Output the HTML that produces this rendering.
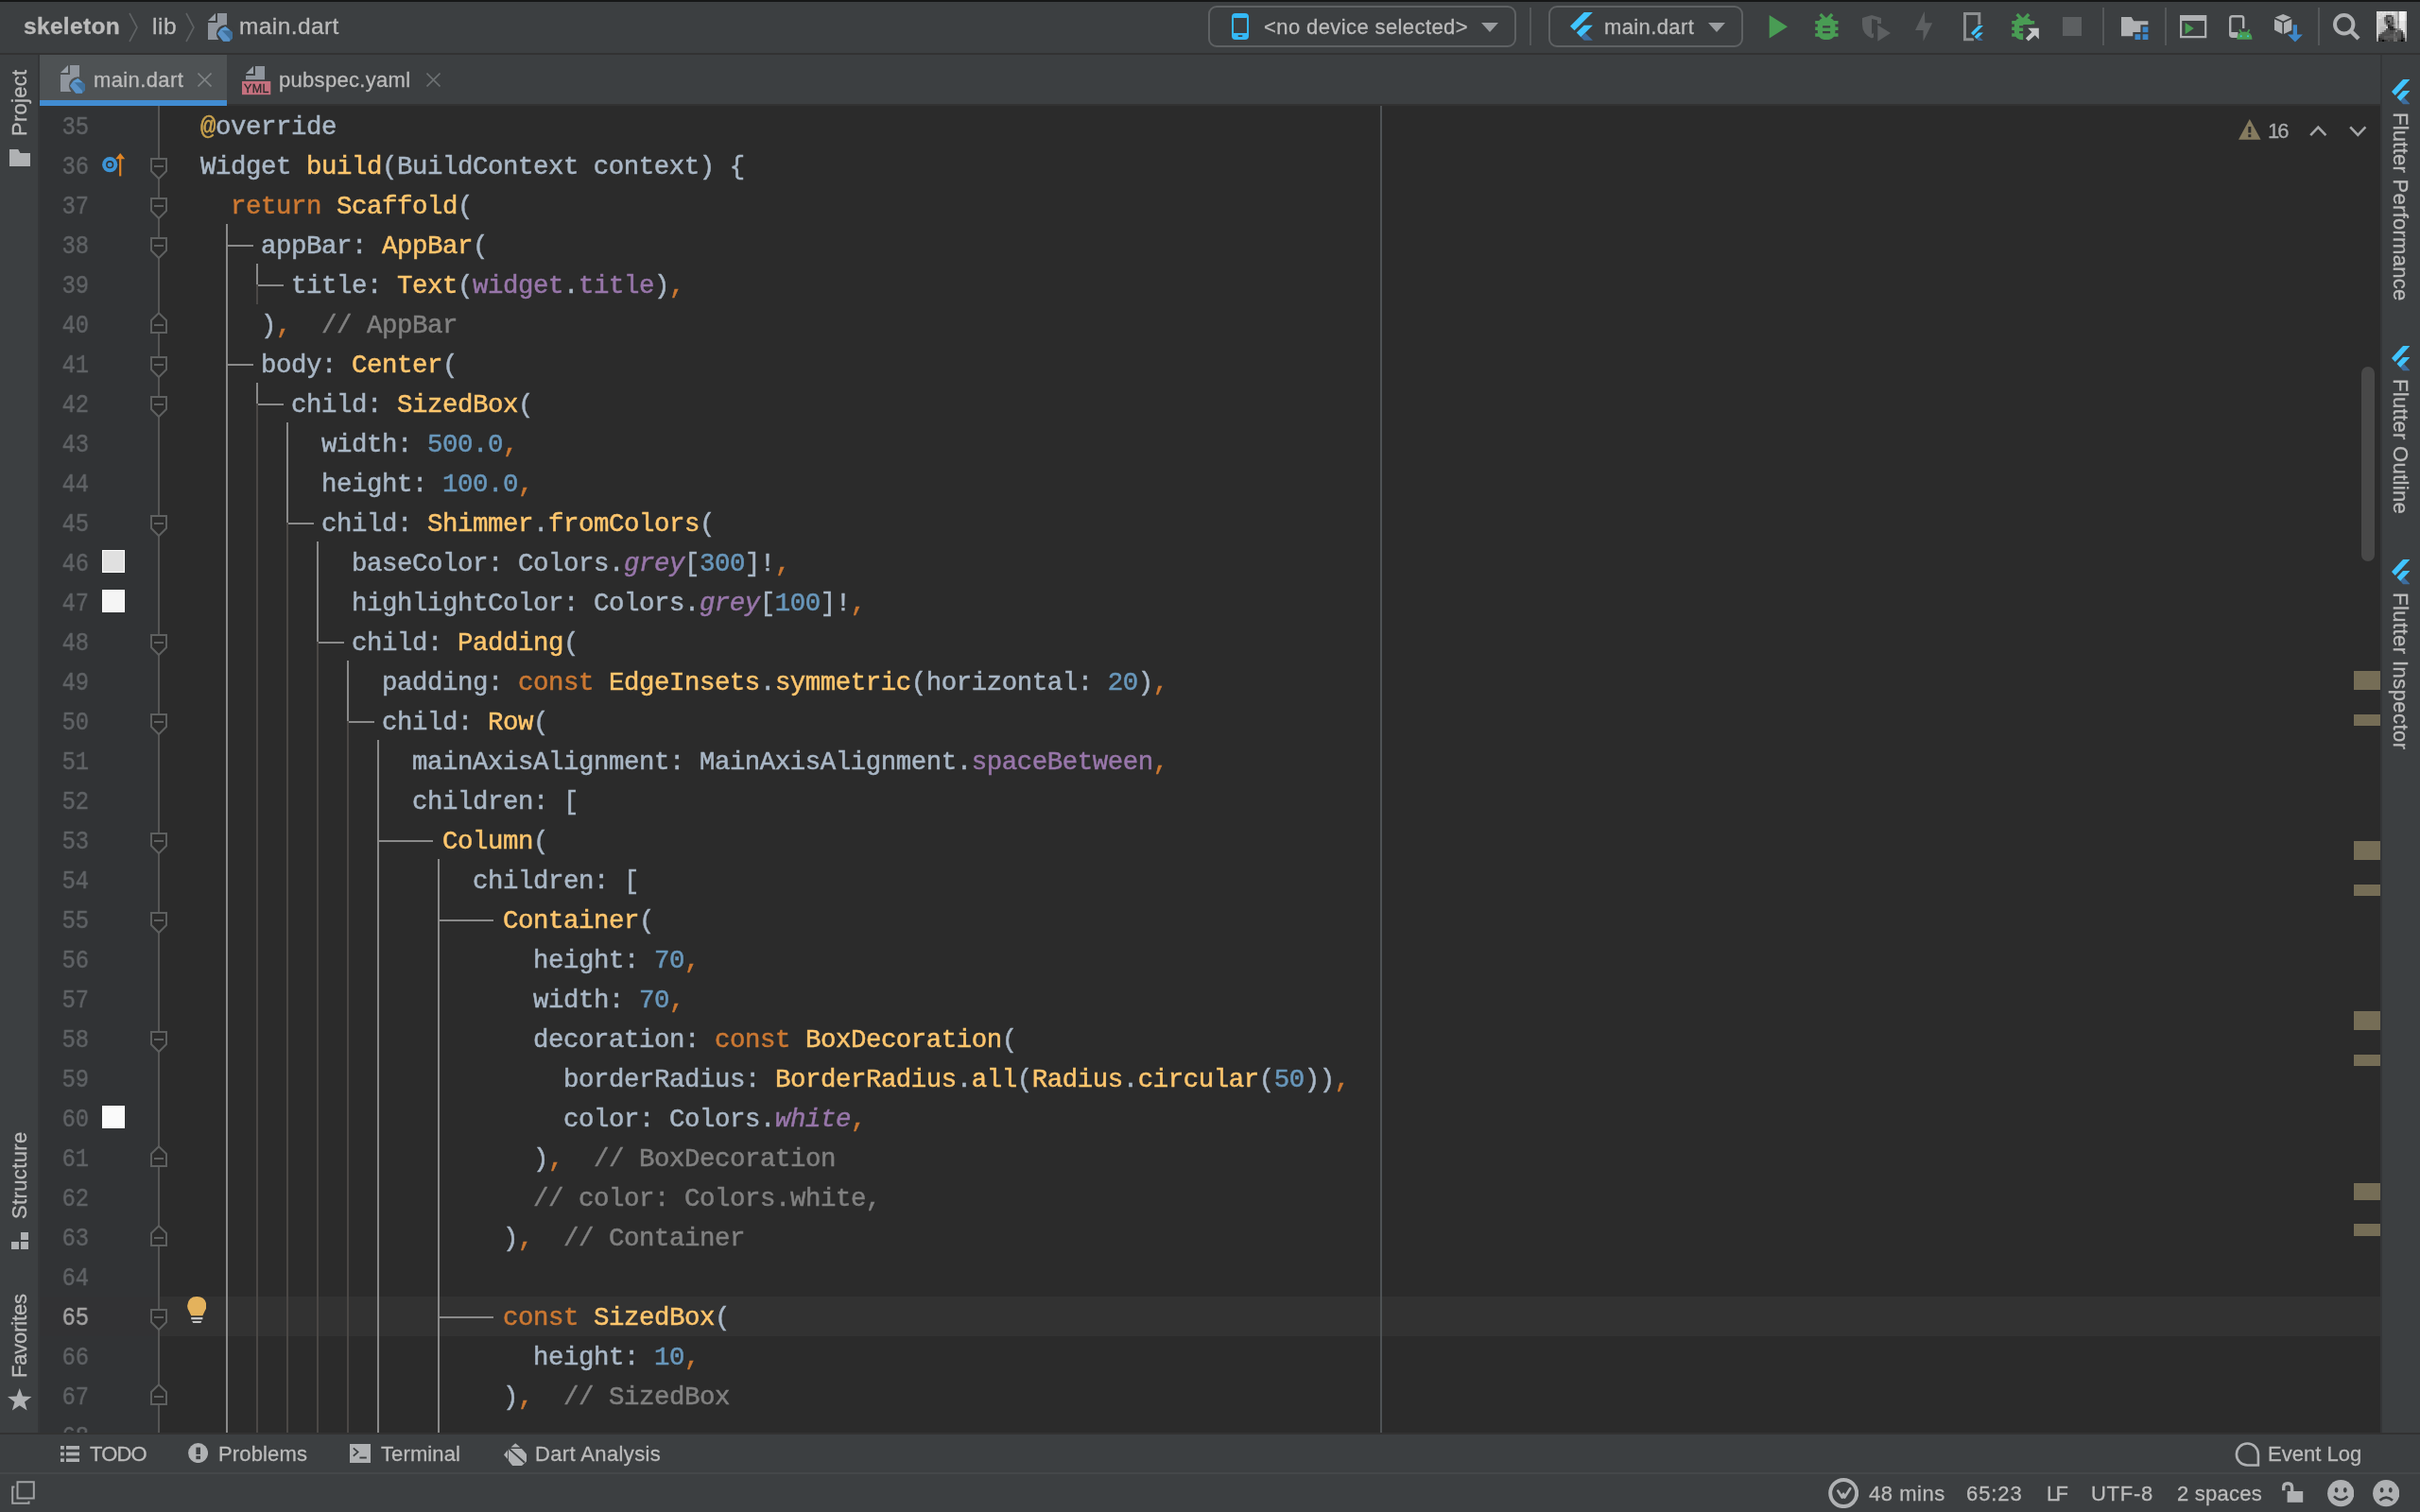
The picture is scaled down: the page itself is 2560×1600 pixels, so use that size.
<!DOCTYPE html>
<html><head><meta charset="utf-8"><title>skeleton - main.dart</title>
<style>
*{box-sizing:border-box;margin:0;padding:0}
html,body{width:2560px;height:1600px;overflow:hidden;background:#3c3f41}
body{position:relative;font-family:"Liberation Sans",sans-serif;color:#bbbbbb;font-size:26px}
.abs{position:absolute}
#nav{position:absolute;left:0;top:0;width:2560px;height:58px;background:#3c3f41;border-top:2px solid #161717;border-bottom:2px solid #323232}
#tabs{position:absolute;left:42px;top:58px;width:2478px;height:54px;background:#3c3f41}
#lstrip{position:absolute;left:0;top:58px;width:42px;height:1458px;background:#3c3f41;border-right:2px solid #343638}
#rstrip{position:absolute;left:2518px;top:58px;width:42px;height:1458px;background:#3c3f41;border-left:2px solid #343638}
#editor{position:absolute;left:42px;top:112px;width:2476px;height:1404px;background:#2b2b2b;overflow:hidden}
#gutter{position:absolute;left:0;top:0;width:126px;height:1405px;background:#313335}
#tools{position:absolute;left:0;top:1516px;width:2560px;height:42px;background:#3c3f41;border-top:2px solid #323232}
#status{position:absolute;left:0;top:1558px;width:2560px;height:42px;background:#3c3f41;border-top:2px solid #45484a}
.t{position:absolute;white-space:pre;line-height:1;-webkit-text-stroke:0.3px currentColor}
.code{position:absolute;white-space:pre;font-family:"Liberation Mono",monospace;font-size:27.4px;letter-spacing:-0.443px;line-height:42px;height:42px;color:#a9b7c6;-webkit-text-stroke:0.5px currentColor}
.ln{position:absolute;white-space:pre;font-family:"Liberation Mono",monospace;font-size:28px;line-height:42px;height:42px;color:#606366;left:0px;width:52px;text-align:right;-webkit-text-stroke:0.45px currentColor;transform:scaleX(0.85);transform-origin:100% 50%}
.k{color:#cc7832}.f{color:#ffc66d}.n{color:#6897bb}.p{color:#9876aa}.pi{color:#9876aa;font-style:italic}.c{color:#808080}.a{color:#c9a24d}
.code,.t,.ln{will-change:transform}
.gv{position:absolute;width:2px}
.gh{position:absolute;height:2px}
.vt{position:absolute;white-space:pre;line-height:1;font-size:26px;color:#bbbbbb}
</style></head><body>

<div id="nav"></div>
<div id="tabs"><div class="abs" style="left:0;top:52px;width:2478px;height:2px;background:#323232"></div><div class="abs" style="left:0;top:0;width:198px;height:54px;background:#4e5254"></div><div class="abs" style="left:0;top:48px;width:198px;height:6px;background:#418cd2"></div></div>
<div id="lstrip"></div><div id="rstrip"></div>
<div id="editor">
<div id="gutter"></div>
<div class="abs" style="left:126px;top:1260px;width:2350px;height:42px;background:#323232"></div>
<div class="abs" style="left:0;top:1260px;width:126px;height:42px;background:#323234"></div>
<div class="gv" style="left:125px;top:0;height:1405px;background:#555555"></div>
<div class="gv" style="left:1418px;top:0;height:1405px;background:#4f5355"></div>
<div class="gv" style="left:197px;top:125px;height:1279px;background:#8a8a8a"></div>
<div class="gh" style="left:199px;top:147px;width:27px;background:#8a8a8a"></div>
<div class="gh" style="left:199px;top:273px;width:27px;background:#8a8a8a"></div>
<div class="gv" style="left:229px;top:167px;height:22px;background:#8a8a8a"></div>
<div class="gv" style="left:229px;top:189px;height:21px;background:#4b4846"></div>
<div class="gh" style="left:231px;top:189px;width:27px;background:#8a8a8a"></div>
<div class="gv" style="left:229px;top:293px;height:22px;background:#8a8a8a"></div>
<div class="gv" style="left:229px;top:315px;height:1089px;background:#4b4846"></div>
<div class="gh" style="left:231px;top:315px;width:27px;background:#8a8a8a"></div>
<div class="gv" style="left:261px;top:335px;height:106px;background:#8a8a8a"></div>
<div class="gv" style="left:261px;top:441px;height:963px;background:#4b4846"></div>
<div class="gh" style="left:263px;top:441px;width:27px;background:#8a8a8a"></div>
<div class="gv" style="left:293px;top:461px;height:106px;background:#8a8a8a"></div>
<div class="gv" style="left:293px;top:567px;height:837px;background:#4b4846"></div>
<div class="gh" style="left:295px;top:567px;width:27px;background:#8a8a8a"></div>
<div class="gv" style="left:325px;top:587px;height:64px;background:#8a8a8a"></div>
<div class="gv" style="left:325px;top:651px;height:753px;background:#4b4846"></div>
<div class="gh" style="left:327px;top:651px;width:27px;background:#8a8a8a"></div>
<div class="gv" style="left:357px;top:671px;height:733px;background:#8a8a8a"></div>
<div class="gh" style="left:359px;top:777px;width:57px;background:#8a8a8a"></div>
<div class="gv" style="left:421px;top:797px;height:607px;background:#8a8a8a"></div>
<div class="gh" style="left:423px;top:861px;width:57px;background:#8a8a8a"></div>
<div class="gh" style="left:423px;top:1281px;width:57px;background:#8a8a8a"></div>
<div class="ln" style="top:1.5px">35</div>
<div class="code" style="left:170px;top:1.5px"><span class="a">@</span>override</div>
<div class="ln" style="top:43.5px">36</div>
<div class="code" style="left:170px;top:43.5px">Widget <span class="f">build</span>(BuildContext context) {</div>
<div class="ln" style="top:85.5px">37</div>
<div class="code" style="left:202px;top:85.5px"><span class="k">return </span><span class="f">Scaffold</span>(</div>
<div class="ln" style="top:127.5px">38</div>
<div class="code" style="left:234px;top:127.5px">appBar: <span class="f">AppBar</span>(</div>
<div class="ln" style="top:169.5px">39</div>
<div class="code" style="left:266px;top:169.5px">title: <span class="f">Text</span>(<span class="p">widget</span>.<span class="p">title</span>)<span class="k">,</span></div>
<div class="ln" style="top:211.5px">40</div>
<div class="code" style="left:234px;top:211.5px">)<span class="k">,</span><span class="c">  // AppBar</span></div>
<div class="ln" style="top:253.5px">41</div>
<div class="code" style="left:234px;top:253.5px">body: <span class="f">Center</span>(</div>
<div class="ln" style="top:295.5px">42</div>
<div class="code" style="left:266px;top:295.5px">child: <span class="f">SizedBox</span>(</div>
<div class="ln" style="top:337.5px">43</div>
<div class="code" style="left:298px;top:337.5px">width: <span class="n">500.0</span><span class="k">,</span></div>
<div class="ln" style="top:379.5px">44</div>
<div class="code" style="left:298px;top:379.5px">height: <span class="n">100.0</span><span class="k">,</span></div>
<div class="ln" style="top:421.5px">45</div>
<div class="code" style="left:298px;top:421.5px">child: <span class="f">Shimmer</span>.<span class="f">fromColors</span>(</div>
<div class="ln" style="top:463.5px">46</div>
<div class="code" style="left:330px;top:463.5px">baseColor: Colors.<span class="pi">grey</span>[<span class="n">300</span>]!<span class="k">,</span></div>
<div class="ln" style="top:505.5px">47</div>
<div class="code" style="left:330px;top:505.5px">highlightColor: Colors.<span class="pi">grey</span>[<span class="n">100</span>]!<span class="k">,</span></div>
<div class="ln" style="top:547.5px">48</div>
<div class="code" style="left:330px;top:547.5px">child: <span class="f">Padding</span>(</div>
<div class="ln" style="top:589.5px">49</div>
<div class="code" style="left:362px;top:589.5px">padding: <span class="k">const </span><span class="f">EdgeInsets</span>.<span class="f">symmetric</span>(horizontal: <span class="n">20</span>)<span class="k">,</span></div>
<div class="ln" style="top:631.5px">50</div>
<div class="code" style="left:362px;top:631.5px">child: <span class="f">Row</span>(</div>
<div class="ln" style="top:673.5px">51</div>
<div class="code" style="left:394px;top:673.5px">mainAxisAlignment: MainAxisAlignment.<span class="p">spaceBetween</span><span class="k">,</span></div>
<div class="ln" style="top:715.5px">52</div>
<div class="code" style="left:394px;top:715.5px">children: [</div>
<div class="ln" style="top:757.5px">53</div>
<div class="code" style="left:426px;top:757.5px"><span class="f">Column</span>(</div>
<div class="ln" style="top:799.5px">54</div>
<div class="code" style="left:458px;top:799.5px">children: [</div>
<div class="ln" style="top:841.5px">55</div>
<div class="code" style="left:490px;top:841.5px"><span class="f">Container</span>(</div>
<div class="ln" style="top:883.5px">56</div>
<div class="code" style="left:522px;top:883.5px">height: <span class="n">70</span><span class="k">,</span></div>
<div class="ln" style="top:925.5px">57</div>
<div class="code" style="left:522px;top:925.5px">width: <span class="n">70</span><span class="k">,</span></div>
<div class="ln" style="top:967.5px">58</div>
<div class="code" style="left:522px;top:967.5px">decoration: <span class="k">const </span><span class="f">BoxDecoration</span>(</div>
<div class="ln" style="top:1009.5px">59</div>
<div class="code" style="left:554px;top:1009.5px">borderRadius: <span class="f">BorderRadius</span>.<span class="f">all</span>(<span class="f">Radius</span>.<span class="f">circular</span>(<span class="n">50</span>))<span class="k">,</span></div>
<div class="ln" style="top:1051.5px">60</div>
<div class="code" style="left:554px;top:1051.5px">color: Colors.<span class="pi">white</span><span class="k">,</span></div>
<div class="ln" style="top:1093.5px">61</div>
<div class="code" style="left:522px;top:1093.5px">)<span class="k">,</span><span class="c">  // BoxDecoration</span></div>
<div class="ln" style="top:1135.5px">62</div>
<div class="code" style="left:522px;top:1135.5px"><span class="c">// color: Colors.white,</span></div>
<div class="ln" style="top:1177.5px">63</div>
<div class="code" style="left:490px;top:1177.5px">)<span class="k">,</span><span class="c">  // Container</span></div>
<div class="ln" style="top:1219.5px">64</div>
<div class="ln" style="top:1261.5px;color:#a4a3a3">65</div>
<div class="code" style="left:490px;top:1261.5px"><span class="k">const </span><span class="f">SizedBox</span>(</div>
<div class="ln" style="top:1303.5px">66</div>
<div class="code" style="left:522px;top:1303.5px">height: <span class="n">10</span><span class="k">,</span></div>
<div class="ln" style="top:1345.5px">67</div>
<div class="code" style="left:490px;top:1345.5px">)<span class="k">,</span><span class="c">  // SizedBox</span></div>
<div class="ln" style="top:1387.5px">68</div>
<svg class="abs" style="left:117px;top:55px" width="18" height="23.5" viewBox="0 0 18 23.5"><path d="M1 1H17V14L9 22 1 14z" fill="#2b2b2b" stroke="#5e6060" stroke-width="2"/><rect x="4" y="8" width="10" height="2" fill="#5e6060"/></svg>
<svg class="abs" style="left:117px;top:97px" width="18" height="23.5" viewBox="0 0 18 23.5"><path d="M1 1H17V14L9 22 1 14z" fill="#2b2b2b" stroke="#5e6060" stroke-width="2"/><rect x="4" y="8" width="10" height="2" fill="#5e6060"/></svg>
<svg class="abs" style="left:117px;top:139px" width="18" height="23.5" viewBox="0 0 18 23.5"><path d="M1 1H17V14L9 22 1 14z" fill="#2b2b2b" stroke="#5e6060" stroke-width="2"/><rect x="4" y="8" width="10" height="2" fill="#5e6060"/></svg>
<svg class="abs" style="left:117px;top:265px" width="18" height="23.5" viewBox="0 0 18 23.5"><path d="M1 1H17V14L9 22 1 14z" fill="#2b2b2b" stroke="#5e6060" stroke-width="2"/><rect x="4" y="8" width="10" height="2" fill="#5e6060"/></svg>
<svg class="abs" style="left:117px;top:307px" width="18" height="23.5" viewBox="0 0 18 23.5"><path d="M1 1H17V14L9 22 1 14z" fill="#2b2b2b" stroke="#5e6060" stroke-width="2"/><rect x="4" y="8" width="10" height="2" fill="#5e6060"/></svg>
<svg class="abs" style="left:117px;top:433px" width="18" height="23.5" viewBox="0 0 18 23.5"><path d="M1 1H17V14L9 22 1 14z" fill="#2b2b2b" stroke="#5e6060" stroke-width="2"/><rect x="4" y="8" width="10" height="2" fill="#5e6060"/></svg>
<svg class="abs" style="left:117px;top:559px" width="18" height="23.5" viewBox="0 0 18 23.5"><path d="M1 1H17V14L9 22 1 14z" fill="#2b2b2b" stroke="#5e6060" stroke-width="2"/><rect x="4" y="8" width="10" height="2" fill="#5e6060"/></svg>
<svg class="abs" style="left:117px;top:643px" width="18" height="23.5" viewBox="0 0 18 23.5"><path d="M1 1H17V14L9 22 1 14z" fill="#2b2b2b" stroke="#5e6060" stroke-width="2"/><rect x="4" y="8" width="10" height="2" fill="#5e6060"/></svg>
<svg class="abs" style="left:117px;top:769px" width="18" height="23.5" viewBox="0 0 18 23.5"><path d="M1 1H17V14L9 22 1 14z" fill="#2b2b2b" stroke="#5e6060" stroke-width="2"/><rect x="4" y="8" width="10" height="2" fill="#5e6060"/></svg>
<svg class="abs" style="left:117px;top:853px" width="18" height="23.5" viewBox="0 0 18 23.5"><path d="M1 1H17V14L9 22 1 14z" fill="#2b2b2b" stroke="#5e6060" stroke-width="2"/><rect x="4" y="8" width="10" height="2" fill="#5e6060"/></svg>
<svg class="abs" style="left:117px;top:979px" width="18" height="23.5" viewBox="0 0 18 23.5"><path d="M1 1H17V14L9 22 1 14z" fill="#2b2b2b" stroke="#5e6060" stroke-width="2"/><rect x="4" y="8" width="10" height="2" fill="#5e6060"/></svg>
<svg class="abs" style="left:117px;top:1273px" width="18" height="23.5" viewBox="0 0 18 23.5"><path d="M1 1H17V14L9 22 1 14z" fill="#2b2b2b" stroke="#5e6060" stroke-width="2"/><rect x="4" y="8" width="10" height="2" fill="#5e6060"/></svg>
<svg class="abs" style="left:117px;top:218px" width="18" height="23.5" viewBox="0 0 18 23.5"><path d="M1 22H17V9L9 1.3 1 9z" fill="#2b2b2b" stroke="#5e6060" stroke-width="2"/><rect x="4" y="13" width="10" height="2" fill="#5e6060"/></svg>
<svg class="abs" style="left:117px;top:1100px" width="18" height="23.5" viewBox="0 0 18 23.5"><path d="M1 22H17V9L9 1.3 1 9z" fill="#2b2b2b" stroke="#5e6060" stroke-width="2"/><rect x="4" y="13" width="10" height="2" fill="#5e6060"/></svg>
<svg class="abs" style="left:117px;top:1184px" width="18" height="23.5" viewBox="0 0 18 23.5"><path d="M1 22H17V9L9 1.3 1 9z" fill="#2b2b2b" stroke="#5e6060" stroke-width="2"/><rect x="4" y="13" width="10" height="2" fill="#5e6060"/></svg>
<svg class="abs" style="left:117px;top:1352px" width="18" height="23.5" viewBox="0 0 18 23.5"><path d="M1 22H17V9L9 1.3 1 9z" fill="#2b2b2b" stroke="#5e6060" stroke-width="2"/><rect x="4" y="13" width="10" height="2" fill="#5e6060"/></svg>
<svg class="abs" style="left:65.8px;top:49.8px" width="25" height="25" viewBox="0 0 25 25"><circle cx="8.2" cy="12.2" r="8.1" fill="#3d94d6"/><circle cx="8.2" cy="12.2" r="3.3" fill="none" stroke="#323436" stroke-width="1.6"/><path d="M19.2 24.4V4" stroke="#e08424" stroke-width="2.2"/><path d="M19.2 0L24.2 6.2H14.2z" fill="#e08424"/></svg>
<div class="abs" style="left:66px;top:470px;width:24px;height:24px;background:#e0e0e0;border:1px solid #fdfdfd"></div>
<div class="abs" style="left:66px;top:512px;width:24px;height:24px;background:#f5f5f5;border:1px solid #fdfdfd"></div>
<div class="abs" style="left:66px;top:1058px;width:24px;height:24px;background:#fafafa;border:1px solid #fdfdfd"></div>
<svg class="abs" style="left:155.8px;top:1259.9px" width="20.6" height="28.5" viewBox="0 0 20.6 28.5"><path fill="#e4b25c" d="M4.2 20.3H16.4L18.6 15.4Q20.6 12.6 20.4 9.6Q19.6 0 10.3 0Q1 0 0.2 9.6Q0 12.6 2 15.4z"/><rect x="4.2" y="22" width="12.2" height="2.3" fill="#c6c6c6"/><path d="M5.2 26H15.4L14.2 28.3H6.4z" fill="#c6c6c6"/></svg>
</div>
<div id="tools"></div><div id="status"></div>
<div class="t" style="left:24.80px;top:15.76px;font-size:24.5px;letter-spacing:0.329px;color:#bbbbbb;font-weight:bold;">skeleton</div>
<svg class="abs" style="left:136px;top:13px" width="11" height="32" viewBox="0 0 11 32"><path d="M1 1L9 16 1 31" fill="none" stroke="#5f6264" stroke-width="1.6"/></svg>
<div class="t" style="left:160.50px;top:15.76px;font-size:24.5px;letter-spacing:0.500px;color:#bbbbbb;">lib</div>
<svg class="abs" style="left:196px;top:13px" width="11" height="32" viewBox="0 0 11 32"><path d="M1 1L9 16 1 31" fill="none" stroke="#5f6264" stroke-width="1.6"/></svg>
<svg class="abs" style="left:220px;top:14px" width="28" height="32" viewBox="0 0 28 32"><path fill="#9aa1a9" d="M0 8L8 0V8z"/><path fill="#8f959d" d="M10 0H20V28H0V10H10z"/><circle cx="18.5" cy="21.8" r="9.6" fill="#3c3f41"/><path fill="#40709b" d="M18.4 14L26 20.1V26.8L23 29.8H16.2L10 21.8 13.4 16.8z"/><path fill="#5a92c6" d="M13.4 16.8L10 21.8 16.2 29.8H23L23 27z"/><path fill="#5d9bd0" d="M18.4 14L13.4 16.8 14.6 18.2H23.5z"/></svg>
<div class="t" style="left:252.50px;top:15.76px;font-size:24.5px;letter-spacing:0.406px;color:#bbbbbb;">main.dart</div>
<div style="position:absolute;border:2px solid #5e6163;border-radius:9px;left:1278px;top:6px;width:326px;height:44px"></div>
<svg class="abs" style="left:1303px;top:14px" width="18" height="28" viewBox="0 0 18 28"><rect x="1" y="1" width="16" height="26" rx="3" fill="none" stroke="#35b8f5" stroke-width="2"/><rect x="1" y="1" width="16" height="4" rx="2" fill="#35b8f5"/><path d="M1 21H17V24.5Q17 27 14.5 27H3.5Q1 27 1 24.5z" fill="#35b8f5"/><rect x="6.5" y="23.3" width="5" height="1.6" rx=".8" fill="#3c3f41"/></svg>
<div class="t" style="left:1336.60px;top:18.08px;font-size:22px;letter-spacing:0.400px;color:#bbbbbb;">&lt;no device selected&gt;</div>
<svg class="abs" style="left:1567px;top:24px" width="18" height="10" viewBox="0 0 18 10"><path d="M0 0H18L9 10z" fill="#9a9da0"/></svg>
<div style="position:absolute;width:2px;height:40px;top:8px;background:#55585a;left:1618px"></div>
<div style="position:absolute;border:2px solid #5e6163;border-radius:9px;left:1638px;top:6px;width:206px;height:44px"></div>
<svg class="abs" style="left:1660.5px;top:13px" width="24" height="30.2188" viewBox="0 0 24 30.2188"><g transform="scale(0.09375,0.09375)"><path fill="#40c4ff" d="M157.666 0L0 157.666l48.8 48.8L255.268 0zM156.567 145.397l-84.418 84.418 48.984 49.716 48.71-48.71 85.425-85.424z"/><path fill="#3d6d9e" d="M121.133 279.531l37.082 37.082h97.052l-85.425-85.792z"/></g></svg>
<div class="t" style="left:1696.60px;top:17.68px;font-size:22px;letter-spacing:0.381px;color:#bbbbbb;">main.dart</div>
<svg class="abs" style="left:1807px;top:24px" width="18" height="10" viewBox="0 0 18 10"><path d="M0 0H18L9 10z" fill="#9a9da0"/></svg>
<svg class="abs" style="left:1871px;top:16px" width="21" height="25" viewBox="0 0 21 25"><path d="M0.7 0L20 12.2 0.7 24.4z" fill="#499c54"/></svg>
<svg class="abs" style="left:1919.8px;top:13.8px" width="25" height="28.5" viewBox="0 0 25 28.5"><g fill="none" stroke="#499c54" stroke-width="3.4"><path d="M5.6 1L10 5.6M18.2 1L13.8 5.6"/><path d="M0.2 9.8H24.5M0.2 16.3H24.5M0.2 23H24.5" stroke-width="3.6"/></g><path fill="#499c54" d="M2.8 13.5Q2.8 4.6 12.1 4.6Q21.4 4.6 21.4 13.5V19.5Q21.4 28.2 12.1 28.2Q2.8 28.2 2.8 19.5z"/><path d="M8.1 14.3H16.1M8.1 20.1H16.1" stroke="#3c3f41" stroke-width="2.2"/></svg>
<svg class="abs" style="left:1969.8px;top:15.9px" width="30" height="28" viewBox="0 0 30 28"><path fill="#5c5f61" d="M0 3L10 0 20 3V9H16V5.5L10 4V20L12 19V23.5L10 24.5Q0 20 0 10z"/><path fill="#5c5f61" d="M16.3 10.5L30 19 16.3 27.7z"/></svg>
<svg class="abs" style="left:2026px;top:12px" width="18.5" height="32" viewBox="0 0 18.5 32"><path fill="#5c5f61" d="M9.8 0L0 20H8.5V31.7L18.2 12.2H10.4z"/></svg>
<svg class="abs" style="left:2076.6px;top:12.8px" width="22" height="31" viewBox="0 0 22 31"><path d="M16.8 13.5V1.5H1.5V28.7H11" fill="none" stroke="#8c8f91" stroke-width="3"/></svg>
<div class="abs" style="left:2084px;top:25.6px;width:14px;height:19px;background:#3c3f41;clip-path:polygon(70% 0,100% 0,100% 100%,45% 100%,0 55%)"></div>
<svg class="abs" style="left:2084.6px;top:26.7px" width="13" height="16.5977" viewBox="0 0 13 16.5977"><g transform="scale(0.0507812,0.0507812)"><path fill="#40c4ff" d="M157.666 0L0 157.666l48.8 48.8L255.268 0zM156.567 145.397l-84.418 84.418 48.984 49.716 48.71-48.71 85.425-85.424z"/><path fill="#3d6d9e" d="M121.133 279.531l37.082 37.082h97.052l-85.425-85.792z"/></g></svg>
<svg class="abs" style="left:2127.7px;top:14px" width="29" height="30" viewBox="0 0 29 30"><g fill="none" stroke="#499c54" stroke-width="3.4"><path d="M5.6 1L10 5.6M18.2 1L13.8 5.6"/><path d="M0.2 9.8H24.2M0.2 16.3H8M0.2 23H8" stroke-width="3.6"/></g><path fill="#499c54" d="M2.8 13.5Q2.8 4.6 12.1 4.6Q21.4 4.6 21.4 12H12.4V28.2Q2.8 28.2 2.8 19.5z"/><path d="M8.1 14.3H12.4M8.1 20.1H12.4" stroke="#3c3f41" stroke-width="2.2"/><path fill="#3c3f41" d="M12.4 12.4H29V30H12.4z"/><path fill="#c3c5c7" d="M17.2 15.8H28.8V27.4L24.7 23.3 17.8 29.6 14.9 26.6 21.4 20z"/></svg>
<div style="position:absolute;left:2182px;top:18px;width:20px;height:20px;background:#5c5f61"></div>
<div style="position:absolute;width:2px;height:40px;top:8px;background:#55585a;left:2224px"></div>
<svg class="abs" style="left:2243.6px;top:17.7px" width="29" height="25" viewBox="0 0 29 25"><path fill="#afb1b3" d="M0 0H10.7L13.2 4.2H28.4V8.3H20.4V16H12.3V20.2H0z"/><rect x="22.6" y="10.4" width="5.8" height="5.8" fill="#3d87c9"/><rect x="14.5" y="18.2" width="5.8" height="5.8" fill="#3d87c9"/><rect x="22.6" y="18.2" width="5.8" height="5.8" fill="#3d87c9"/></svg>
<div style="position:absolute;width:2px;height:40px;top:8px;background:#55585a;left:2290px"></div>
<svg class="abs" style="left:2306px;top:16px" width="28.5" height="24.5" viewBox="0 0 28.5 24.5"><path fill="#afb1b3" d="M0 0H28.3V24.2H0zM2.2 6V22H26.1V6z" fill-rule="evenodd"/><path fill="#499c54" d="M5.6 8L14.8 14 5.6 20.2z"/></svg>
<svg class="abs" style="left:2357.8px;top:16px" width="25" height="26" viewBox="0 0 25 26"><path d="M11 22.8H3.5Q1.2 22.8 1.2 20.5V3.5Q1.2 1.2 3.5 1.2H13Q15.2 1.2 15.2 3.5V14" fill="none" stroke="#afb1b3" stroke-width="2.4"/><path d="M1.2 18H9.5V22.8H3.5Q1.2 22.8 1.2 20.5z" fill="#afb1b3"/><path d="M8.2 25.7Q8.2 17.6 16.3 17.6Q24.5 17.6 24.5 25.7z" fill="#499c54"/><path d="M11 15.2L13 18.5M21.6 15.2L19.6 18.5" stroke="#499c54" stroke-width="1.8"/><circle cx="12.7" cy="22.3" r="1" fill="#35d0e0"/><circle cx="20" cy="22.3" r="1" fill="#35d0e0"/></svg>
<svg class="abs" style="left:2406px;top:14.7px" width="30" height="30" viewBox="0 0 30 30"><path fill="#afb1b3" d="M9.2 0L17.6 3.6 9.2 7.4 0.6 3.6z"/><path fill="#afb1b3" d="M0 5.2L8.3 9V21L0 16.8z"/><path fill="#afb1b3" d="M10 9L18.3 5.2V17L10 21z"/><path fill="#3d87c9" stroke="#3c3f41" stroke-width="1.6" paint-order="stroke" d="M19.7 11.3H24V21.5H30L21.9 29.5 13.8 21.5H19.7z"/></svg>
<div style="position:absolute;width:2px;height:40px;top:8px;background:#55585a;left:2452px"></div>
<svg class="abs" style="left:2467.8px;top:13.5px" width="29" height="29" viewBox="0 0 29 29"><circle cx="11.7" cy="11.7" r="9.7" fill="none" stroke="#afb1b3" stroke-width="4"/><path d="M18.5 18.5L27 27" stroke="#afb1b3" stroke-width="4.4"/></svg>
<svg class="abs" style="left:2514px;top:12px" width="32" height="32" viewBox="0 0 32 32" shape-rendering="crispEdges"><rect x="0" y="0" width="2" height="2" fill="#d8d8d8"/><rect x="2" y="0" width="2" height="2" fill="#d4d4d4"/><rect x="4" y="0" width="2" height="2" fill="#e0e0e0"/><rect x="6" y="0" width="2" height="2" fill="#d4d4d4"/><rect x="8" y="0" width="2" height="2" fill="#e0e0e0"/><rect x="10" y="0" width="2" height="2" fill="#d4d4d4"/><rect x="12" y="0" width="2" height="2" fill="#e0e0e0"/><rect x="14" y="0" width="2" height="2" fill="#d4d4d4"/><rect x="16" y="0" width="2" height="2" fill="#e0e0e0"/><rect x="18" y="0" width="2" height="2" fill="#d4d4d4"/><rect x="20" y="0" width="2" height="2" fill="#c8c8c8"/><rect x="22" y="0" width="2" height="2" fill="#a0a0a0"/><rect x="24" y="0" width="2" height="2" fill="#f4f4f4"/><rect x="26" y="0" width="2" height="2" fill="#f8f8f8"/><rect x="28" y="0" width="2" height="2" fill="#f4f4f4"/><rect x="30" y="0" width="2" height="2" fill="#d8d8d8"/><rect x="0" y="2" width="2" height="2" fill="#d4d4d4"/><rect x="2" y="2" width="2" height="2" fill="#e0e0e0"/><rect x="4" y="2" width="2" height="2" fill="#d4d4d4"/><rect x="6" y="2" width="2" height="2" fill="#e0e0e0"/><rect x="8" y="2" width="2" height="2" fill="#d8d8d8"/><rect x="10" y="2" width="6" height="2" fill="#c8c8c8"/><rect x="16" y="2" width="2" height="2" fill="#e0e0e0"/><rect x="18" y="2" width="2" height="2" fill="#d8d8d8"/><rect x="20" y="2" width="2" height="2" fill="#c8c8c8"/><rect x="22" y="2" width="2" height="2" fill="#a0a0a0"/><rect x="24" y="2" width="2" height="2" fill="#f4f4f4"/><rect x="26" y="2" width="2" height="2" fill="#f0f0f0"/><rect x="28" y="2" width="2" height="2" fill="#f4f4f4"/><rect x="30" y="2" width="2" height="2" fill="#d8d8d8"/><rect x="0" y="4" width="2" height="2" fill="#d0d0d0"/><rect x="2" y="4" width="4" height="2" fill="#d4d4d4"/><rect x="6" y="4" width="2" height="2" fill="#d8d8d8"/><rect x="8" y="4" width="2" height="2" fill="#c4c4c4"/><rect x="10" y="4" width="2" height="2" fill="#4c4c4c"/><rect x="12" y="4" width="4" height="2" fill="#4a4a4a"/><rect x="16" y="4" width="2" height="2" fill="#909090"/><rect x="18" y="4" width="2" height="2" fill="#c4c4c4"/><rect x="20" y="4" width="2" height="2" fill="#c8c8c8"/><rect x="22" y="4" width="2" height="2" fill="#a0a0a0"/><rect x="24" y="4" width="2" height="2" fill="#f0f0f0"/><rect x="26" y="4" width="2" height="2" fill="#f4f4f4"/><rect x="28" y="4" width="2" height="2" fill="#f0f0f0"/><rect x="30" y="4" width="2" height="2" fill="#d4d4d4"/><rect x="0" y="6" width="2" height="2" fill="#d0d0d0"/><rect x="2" y="6" width="2" height="2" fill="#e0e0e0"/><rect x="4" y="6" width="2" height="2" fill="#d4d4d4"/><rect x="6" y="6" width="2" height="2" fill="#c4c4c4"/><rect x="8" y="6" width="2" height="2" fill="#6c6c6c"/><rect x="10" y="6" width="2" height="2" fill="#505050"/><rect x="12" y="6" width="2" height="2" fill="#787878"/><rect x="14" y="6" width="2" height="2" fill="#7a7a7a"/><rect x="16" y="6" width="2" height="2" fill="#505050"/><rect x="18" y="6" width="2" height="2" fill="#c0c0c0"/><rect x="20" y="6" width="2" height="2" fill="#c8c8c8"/><rect x="22" y="6" width="2" height="2" fill="#a0a0a0"/><rect x="24" y="6" width="2" height="2" fill="#f4f4f4"/><rect x="26" y="6" width="2" height="2" fill="#f0f0f0"/><rect x="28" y="6" width="2" height="2" fill="#f4f4f4"/><rect x="30" y="6" width="2" height="2" fill="#d4d4d4"/><rect x="0" y="8" width="2" height="2" fill="#d0d0d0"/><rect x="2" y="8" width="6" height="2" fill="#c4c4c4"/><rect x="8" y="8" width="2" height="2" fill="#6c6c6c"/><rect x="10" y="8" width="2" height="2" fill="#4c4c4c"/><rect x="12" y="8" width="2" height="2" fill="#6a6a6a"/><rect x="14" y="8" width="2" height="2" fill="#6c6c6c"/><rect x="16" y="8" width="2" height="2" fill="#565656"/><rect x="18" y="8" width="2" height="2" fill="#a8a8a8"/><rect x="20" y="8" width="2" height="2" fill="#c8c8c8"/><rect x="22" y="8" width="2" height="2" fill="#a0a0a0"/><rect x="24" y="8" width="2" height="2" fill="#f0f0f0"/><rect x="26" y="8" width="2" height="2" fill="#f4f4f4"/><rect x="28" y="8" width="2" height="2" fill="#f0f0f0"/><rect x="30" y="8" width="2" height="2" fill="#d4d4d4"/><rect x="0" y="10" width="2" height="2" fill="#d0d0d0"/><rect x="2" y="10" width="6" height="2" fill="#c4c4c4"/><rect x="8" y="10" width="2" height="2" fill="#868686"/><rect x="10" y="10" width="2" height="2" fill="#4a4a4a"/><rect x="12" y="10" width="2" height="2" fill="#1e1e1e"/><rect x="14" y="10" width="2" height="2" fill="#6c6c6c"/><rect x="16" y="10" width="2" height="2" fill="#5e5e5e"/><rect x="18" y="10" width="2" height="2" fill="#a2a2a2"/><rect x="20" y="10" width="2" height="2" fill="#c4c4c4"/><rect x="22" y="10" width="2" height="2" fill="#8a8a8a"/><rect x="24" y="10" width="6" height="2" fill="#e4e4e4"/><rect x="30" y="10" width="2" height="2" fill="#c0c0c0"/><rect x="0" y="12" width="2" height="2" fill="#d0d0d0"/><rect x="2" y="12" width="6" height="2" fill="#c4c4c4"/><rect x="8" y="12" width="2" height="2" fill="#9e9e9e"/><rect x="10" y="12" width="2" height="2" fill="#565656"/><rect x="12" y="12" width="2" height="2" fill="#5c5c5c"/><rect x="14" y="12" width="2" height="2" fill="#585858"/><rect x="16" y="12" width="2" height="2" fill="#4a4a4a"/><rect x="18" y="12" width="2" height="2" fill="#8a8a8a"/><rect x="20" y="12" width="2" height="2" fill="#c4c4c4"/><rect x="22" y="12" width="2" height="2" fill="#949494"/><rect x="24" y="12" width="6" height="2" fill="#e4e4e4"/><rect x="30" y="12" width="2" height="2" fill="#c0c0c0"/><rect x="0" y="14" width="2" height="2" fill="#d0d0d0"/><rect x="2" y="14" width="8" height="2" fill="#c4c4c4"/><rect x="10" y="14" width="2" height="2" fill="#8e8e8e"/><rect x="12" y="14" width="2" height="2" fill="#2a2a2a"/><rect x="14" y="14" width="2" height="2" fill="#444444"/><rect x="16" y="14" width="2" height="2" fill="#6c6c6c"/><rect x="18" y="14" width="2" height="2" fill="#9c9c9c"/><rect x="20" y="14" width="2" height="2" fill="#c4c4c4"/><rect x="22" y="14" width="2" height="2" fill="#a0a0a0"/><rect x="24" y="14" width="6" height="2" fill="#e4e4e4"/><rect x="30" y="14" width="2" height="2" fill="#c0c0c0"/><rect x="0" y="16" width="2" height="2" fill="#d0d0d0"/><rect x="2" y="16" width="2" height="2" fill="#c4c4c4"/><rect x="4" y="16" width="2" height="2" fill="#bababa"/><rect x="6" y="16" width="4" height="2" fill="#b8b8b8"/><rect x="10" y="16" width="2" height="2" fill="#d0d0d0"/><rect x="12" y="16" width="2" height="2" fill="#2a2a2a"/><rect x="14" y="16" width="4" height="2" fill="#262626"/><rect x="18" y="16" width="2" height="2" fill="#868686"/><rect x="20" y="16" width="2" height="2" fill="#c4c4c4"/><rect x="22" y="16" width="2" height="2" fill="#a0a0a0"/><rect x="24" y="16" width="2" height="2" fill="#e4e4e4"/><rect x="26" y="16" width="2" height="2" fill="#e0e0e0"/><rect x="28" y="16" width="2" height="2" fill="#e4e4e4"/><rect x="30" y="16" width="2" height="2" fill="#c0c0c0"/><rect x="0" y="18" width="2" height="2" fill="#d0d0d0"/><rect x="2" y="18" width="2" height="2" fill="#c0c0c0"/><rect x="4" y="18" width="6" height="2" fill="#b8b8b8"/><rect x="10" y="18" width="2" height="2" fill="#5c5c5c"/><rect x="12" y="18" width="2" height="2" fill="#4a4a4a"/><rect x="14" y="18" width="4" height="2" fill="#2a2a2a"/><rect x="18" y="18" width="2" height="2" fill="#3c3c3c"/><rect x="20" y="18" width="2" height="2" fill="#707070"/><rect x="22" y="18" width="2" height="2" fill="#8a8a8a"/><rect x="24" y="18" width="2" height="2" fill="#9a9a9a"/><rect x="26" y="18" width="4" height="2" fill="#e4e4e4"/><rect x="30" y="18" width="2" height="2" fill="#c0c0c0"/><rect x="0" y="20" width="2" height="2" fill="#d0d0d0"/><rect x="2" y="20" width="2" height="2" fill="#c0c0c0"/><rect x="4" y="20" width="2" height="2" fill="#b8b8b8"/><rect x="6" y="20" width="2" height="2" fill="#aaaaaa"/><rect x="8" y="20" width="2" height="2" fill="#6a6a6a"/><rect x="10" y="20" width="2" height="2" fill="#4c4c4c"/><rect x="12" y="20" width="2" height="2" fill="#525252"/><rect x="14" y="20" width="4" height="2" fill="#4a4a4a"/><rect x="18" y="20" width="2" height="2" fill="#5c5c5c"/><rect x="20" y="20" width="2" height="2" fill="#8e8e8e"/><rect x="22" y="20" width="4" height="2" fill="#5a5a5a"/><rect x="26" y="20" width="2" height="2" fill="#6c6c6c"/><rect x="28" y="20" width="2" height="2" fill="#e8e8e8"/><rect x="30" y="20" width="2" height="2" fill="#c0c0c0"/><rect x="0" y="22" width="2" height="2" fill="#d0d0d0"/><rect x="2" y="22" width="2" height="2" fill="#c0c0c0"/><rect x="4" y="22" width="2" height="2" fill="#8c8c8c"/><rect x="6" y="22" width="6" height="2" fill="#525252"/><rect x="12" y="22" width="2" height="2" fill="#505050"/><rect x="14" y="22" width="4" height="2" fill="#484848"/><rect x="18" y="22" width="2" height="2" fill="#606060"/><rect x="20" y="22" width="2" height="2" fill="#505050"/><rect x="22" y="22" width="4" height="2" fill="#585858"/><rect x="26" y="22" width="2" height="2" fill="#3a3a3a"/><rect x="28" y="22" width="2" height="2" fill="#b0b0b0"/><rect x="30" y="22" width="2" height="2" fill="#c4c4c4"/><rect x="0" y="24" width="2" height="2" fill="#d0d0d0"/><rect x="2" y="24" width="2" height="2" fill="#6c6c6c"/><rect x="4" y="24" width="2" height="2" fill="#4c4c4c"/><rect x="6" y="24" width="8" height="2" fill="#4e4e4e"/><rect x="14" y="24" width="4" height="2" fill="#565656"/><rect x="18" y="24" width="2" height="2" fill="#6c6c6c"/><rect x="20" y="24" width="2" height="2" fill="#525252"/><rect x="22" y="24" width="4" height="2" fill="#585858"/><rect x="26" y="24" width="2" height="2" fill="#333333"/><rect x="28" y="24" width="2" height="2" fill="#7c7c7c"/><rect x="30" y="24" width="2" height="2" fill="#c0c0c0"/><rect x="0" y="26" width="2" height="2" fill="#c8c8c8"/><rect x="2" y="26" width="4" height="2" fill="#4a4a4a"/><rect x="6" y="26" width="2" height="2" fill="#4e4e4e"/><rect x="8" y="26" width="10" height="2" fill="#5a5a5a"/><rect x="18" y="26" width="2" height="2" fill="#646464"/><rect x="20" y="26" width="2" height="2" fill="#5c5c5c"/><rect x="22" y="26" width="4" height="2" fill="#565656"/><rect x="26" y="26" width="2" height="2" fill="#303030"/><rect x="28" y="26" width="2" height="2" fill="#6c6c6c"/><rect x="30" y="26" width="2" height="2" fill="#b8b8b8"/><rect x="0" y="28" width="2" height="2" fill="#b0b0b0"/><rect x="2" y="28" width="2" height="2" fill="#2c2c2c"/><rect x="4" y="28" width="2" height="2" fill="#3a3a3a"/><rect x="6" y="28" width="2" height="2" fill="#464646"/><rect x="8" y="28" width="4" height="2" fill="#565656"/><rect x="12" y="28" width="6" height="2" fill="#4e4e4e"/><rect x="18" y="28" width="4" height="2" fill="#686868"/><rect x="22" y="28" width="4" height="2" fill="#4c4c4c"/><rect x="26" y="28" width="2" height="2" fill="#2c2c2c"/><rect x="28" y="28" width="2" height="2" fill="#2a2a2a"/><rect x="30" y="28" width="2" height="2" fill="#9a9a9a"/><rect x="0" y="30" width="2" height="2" fill="#a0a0a0"/><rect x="2" y="30" width="2" height="2" fill="#2a2a2a"/><rect x="4" y="30" width="2" height="2" fill="#2c2c2c"/><rect x="6" y="30" width="2" height="2" fill="#000000"/><rect x="8" y="30" width="2" height="2" fill="#333333"/><rect x="10" y="30" width="2" height="2" fill="#3e3e3e"/><rect x="12" y="30" width="2" height="2" fill="#525252"/><rect x="14" y="30" width="4" height="2" fill="#404040"/><rect x="18" y="30" width="4" height="2" fill="#6c6c6c"/><rect x="22" y="30" width="2" height="2" fill="#3a3a3a"/><rect x="24" y="30" width="2" height="2" fill="#333333"/><rect x="26" y="30" width="2" height="2" fill="#000000"/><rect x="28" y="30" width="2" height="2" fill="#2a2a2a"/><rect x="30" y="30" width="2" height="2" fill="#8c8c8c"/></svg>
<svg class="abs" style="left:63.8px;top:69.4px" width="28" height="32" viewBox="0 0 28 32"><path fill="#9aa1a9" d="M0 8L8 0V8z"/><path fill="#8f959d" d="M10 0H20V28H0V10H10z"/><circle cx="18.5" cy="21.8" r="9.6" fill="#4e5254"/><path fill="#40709b" d="M18.4 14L26 20.1V26.8L23 29.8H16.2L10 21.8 13.4 16.8z"/><path fill="#5a92c6" d="M13.4 16.8L10 21.8 16.2 29.8H23L23 27z"/><path fill="#5d9bd0" d="M18.4 14L13.4 16.8 14.6 18.2H23.5z"/></svg>
<div class="t" style="left:98.50px;top:74.08px;font-size:22px;letter-spacing:0.381px;color:#bbbbbb;">main.dart</div>
<svg class="abs" style="left:208.5px;top:76.5px" width="15" height="15" viewBox="0 0 15 15"><path d="M0.5 0.5L14.5 14.5M14.5 0.5L0.5 14.5" stroke="#7e8284" stroke-width="1.6"/></svg>
<svg class="abs" style="left:256px;top:69.8px" width="31" height="31" viewBox="0 0 31 31"><path fill="#9aa1a9" d="M4 8L12 0V8z"/><path fill="#8f959d" d="M14 0H24V14.2H4V10H14z"/><rect x="0" y="16" width="30.3" height="14.2" fill="#c4707e"/></svg>
<div class="t" style="left:258.40px;top:87.52px;font-size:12.5px;letter-spacing:0.325px;color:#2b2b2b;">YML</div>
<div class="t" style="left:294.50px;top:74.08px;font-size:22px;letter-spacing:0.305px;color:#bbbbbb;">pubspec.yaml</div>
<svg class="abs" style="left:451px;top:76.5px" width="15" height="15" viewBox="0 0 15 15"><path d="M0.5 0.5L14.5 14.5M14.5 0.5L0.5 14.5" stroke="#6c7072" stroke-width="1.6"/></svg>
<div class="t" style="left:9.58px;top:144.10px;font-size:22px;letter-spacing:0.267px;color:#bbbbbb;transform-origin:0 0;transform:rotate(-90deg)">Project</div>
<svg class="abs" style="left:10px;top:158px" width="22" height="18" viewBox="0 0 22 18"><path fill="#afb1b3" d="M0 0H9.2L11.4 4H22V18H0z"/></svg>
<div class="t" style="left:9.98px;top:1290.00px;font-size:22px;letter-spacing:0.369px;color:#bbbbbb;transform-origin:0 0;transform:rotate(-90deg)">Structure</div>
<svg class="abs" style="left:12px;top:1304px" width="18" height="18" viewBox="0 0 18 18"><rect x="0" y="10" width="8" height="8" fill="#afb1b3"/><rect x="10" y="10" width="8" height="8" fill="#afb1b3"/><rect x="10" y="0" width="8" height="8" fill="#afb1b3"/></svg>
<div class="t" style="left:9.98px;top:1458.00px;font-size:22px;letter-spacing:-0.188px;color:#bbbbbb;transform-origin:0 0;transform:rotate(-90deg)">Favorites</div>
<svg class="abs" style="left:8px;top:1469px" width="25.5" height="24" viewBox="0 0 25.5 24"><path fill="#afb1b3" d="M12.75 0L15.9 8.6 25.5 9 18 14.6 20.6 23.5 12.75 18.3 4.9 23.5 7.5 14.6 0 9 9.6 8.6z"/></svg>
<svg class="abs" style="left:2529.6px;top:83.9px" width="19.6" height="26.7" viewBox="0 0 19.6 26.7"><g transform="scale(0.0765625,0.0826498)"><path fill="#40c4ff" d="M157.666 0L0 157.666l48.8 48.8L255.268 0zM156.567 145.397l-84.418 84.418 48.984 49.716 48.71-48.71 85.425-85.424z"/><path fill="#3d6d9e" d="M121.133 279.531l37.082 37.082h97.052l-85.425-85.792z"/></g></svg>
<div class="t" style="left:2550.02px;top:118.70px;font-size:22px;letter-spacing:0.267px;color:#bbbbbb;transform-origin:0 0;transform:rotate(90deg)">Flutter Performance</div>
<svg class="abs" style="left:2529.6px;top:365.9px" width="19.6" height="26.7" viewBox="0 0 19.6 26.7"><g transform="scale(0.0765625,0.0826498)"><path fill="#40c4ff" d="M157.666 0L0 157.666l48.8 48.8L255.268 0zM156.567 145.397l-84.418 84.418 48.984 49.716 48.71-48.71 85.425-85.424z"/><path fill="#3d6d9e" d="M121.133 279.531l37.082 37.082h97.052l-85.425-85.792z"/></g></svg>
<div class="t" style="left:2550.02px;top:401.20px;font-size:22px;letter-spacing:0.332px;color:#bbbbbb;transform-origin:0 0;transform:rotate(90deg)">Flutter Outline</div>
<svg class="abs" style="left:2529.6px;top:591.9px" width="19.6" height="26.7" viewBox="0 0 19.6 26.7"><g transform="scale(0.0765625,0.0826498)"><path fill="#40c4ff" d="M157.666 0L0 157.666l48.8 48.8L255.268 0zM156.567 145.397l-84.418 84.418 48.984 49.716 48.71-48.71 85.425-85.424z"/><path fill="#3d6d9e" d="M121.133 279.531l37.082 37.082h97.052l-85.425-85.792z"/></g></svg>
<div class="t" style="left:2550.02px;top:627.10px;font-size:22px;letter-spacing:0.444px;color:#bbbbbb;transform-origin:0 0;transform:rotate(90deg)">Flutter Inspector</div>
<svg class="abs" style="left:2368.2px;top:126.1px" width="24" height="22" viewBox="0 0 24 22"><path fill="#857b5f" d="M11.8 0L23.6 21.7H0z"/><rect x="10.3" y="8" width="3" height="6.5" fill="#2b2b2b"/><rect x="10.3" y="16.2" width="3" height="3" fill="#2b2b2b"/></svg>
<div class="t" style="left:2398.60px;top:128.08px;font-size:22px;letter-spacing:-1.900px;color:#a9abad;">16</div>
<svg class="abs" style="left:2443px;top:132px" width="19" height="12.5" viewBox="0 0 19 12.5"><path d="M1.2 11.2L9.3 2.6 17.4 11.2" fill="none" stroke="#a4a6a8" stroke-width="2.6"/></svg>
<svg class="abs" style="left:2484.6px;top:133.2px" width="19" height="12.5" viewBox="0 0 19 12.5"><path d="M1.2 1.3L9.3 9.9 17.4 1.3" fill="none" stroke="#a4a6a8" stroke-width="2.6"/></svg>
<div class="abs" style="left:2498px;top:388px;width:14px;height:206px;border-radius:7px;background:#484848"></div>
<div class="abs" style="left:2490px;top:710px;width:28px;height:20px;background:#756d56"></div>
<div class="abs" style="left:2490px;top:756px;width:28px;height:12px;background:#756d56"></div>
<div class="abs" style="left:2490px;top:890px;width:28px;height:20px;background:#756d56"></div>
<div class="abs" style="left:2490px;top:936px;width:28px;height:12px;background:#756d56"></div>
<div class="abs" style="left:2490px;top:1070px;width:28px;height:20px;background:#756d56"></div>
<div class="abs" style="left:2490px;top:1116px;width:28px;height:12px;background:#756d56"></div>
<div class="abs" style="left:2490px;top:1252px;width:28px;height:18px;background:#756d56"></div>
<div class="abs" style="left:2490px;top:1295px;width:28px;height:13px;background:#756d56"></div>
<svg class="abs" style="left:63.8px;top:1530px" width="20.5" height="17.2" viewBox="0 0 20.5 17.2"><rect x="0" y="0" width="3.8" height="3.7" fill="#afb1b3"/><rect x="6" y="0" width="14.4" height="3.7" fill="#afb1b3"/><rect x="0" y="6.7" width="3.8" height="3.7" fill="#afb1b3"/><rect x="6" y="6.7" width="14.4" height="3.7" fill="#afb1b3"/><rect x="0" y="13.4" width="3.8" height="3.7" fill="#afb1b3"/><rect x="6" y="13.4" width="14.4" height="3.7" fill="#afb1b3"/></svg>
<div class="t" style="left:94.70px;top:1527.58px;font-size:22px;letter-spacing:-0.883px;color:#bbbbbb;">TODO</div>
<svg class="abs" style="left:198.6px;top:1527.1px" width="21.2" height="21.2" viewBox="0 0 21.2 21.2"><circle cx="10.6" cy="10.6" r="10.5" fill="#afb1b3"/><rect x="8.4" y="4.6" width="4.6" height="7.4" fill="#3c3f41"/><rect x="8.4" y="13.6" width="4.6" height="3.6" fill="#3c3f41"/></svg>
<div class="t" style="left:230.90px;top:1527.58px;font-size:22px;letter-spacing:0.143px;color:#bbbbbb;">Problems</div>
<svg class="abs" style="left:370px;top:1528.1px" width="22.2" height="20" viewBox="0 0 22.2 20"><rect width="22.2" height="20" fill="#afb1b3"/><path d="M3.8 4.4L8.6 8.6 3.8 12.8" fill="none" stroke="#3c3f41" stroke-width="1.8"/><rect x="10.4" y="13.6" width="7.4" height="1.9" fill="#3c3f41"/></svg>
<div class="t" style="left:402.60px;top:1527.58px;font-size:22px;letter-spacing:0.107px;color:#bbbbbb;">Terminal</div>
<svg class="abs" style="left:533px;top:1527.2px" width="24.2" height="24" viewBox="0 0 24.2 24"><path fill="#afb1b3" d="M0 12.6L4 7.4V17.1z"/><path fill="#afb1b3" d="M12.2 0.2L17.3 4.4H7.5z"/><path fill="#afb1b3" d="M5.5 6H18.9L24.1 11.9V19.3L18.9 24.1H9.2L4.9 18.6V6.6z"/><path d="M5.6 6.2L22 20.8" stroke="#3c3f41" stroke-width="1.8"/></svg>
<div class="t" style="left:566.30px;top:1527.58px;font-size:22px;letter-spacing:0.367px;color:#bbbbbb;">Dart Analysis</div>
<svg class="abs" style="left:2363.6px;top:1526px" width="27" height="27" viewBox="0 0 27 27"><path d="M24.9 13A11.5 11.5 0 1 0 13.4 24.5H24.9z" fill="none" stroke="#afb1b3" stroke-width="2.6"/></svg>
<div class="t" style="left:2398.60px;top:1527.88px;font-size:22px;letter-spacing:0.025px;color:#bbbbbb;">Event Log</div>
<svg class="abs" style="left:11.6px;top:1567.4px" width="25" height="25" viewBox="0 0 25 25"><path d="M6.5 1.2H23.8V18.5H6.5z" fill="none" stroke="#a0a2a4" stroke-width="2"/><path d="M3.4 6.5H1.2V23.8H18.5V21.4" fill="none" stroke="#a0a2a4" stroke-width="2"/></svg>
<svg class="abs" style="left:1933.8px;top:1563.9px" width="32.4" height="32.4" viewBox="0 0 32.4 32.4"><circle cx="16.2" cy="16.1" r="14" fill="none" stroke="#afb1b3" stroke-width="4"/><path d="M10.3 13.6L14.7 20.6 16 16.8 17.3 20.6 23.2 11.2" fill="none" stroke="#afb1b3" stroke-width="2.7" stroke-linecap="round" stroke-linejoin="round"/></svg>
<div class="t" style="left:1976.60px;top:1569.88px;font-size:22px;letter-spacing:0.517px;color:#bbbbbb;">48 mins</div>
<div class="t" style="left:2080.40px;top:1569.88px;font-size:22px;letter-spacing:0.925px;color:#bbbbbb;">65:23</div>
<div class="t" style="left:2164.60px;top:1569.88px;font-size:22px;letter-spacing:-2.650px;color:#bbbbbb;">LF</div>
<div class="t" style="left:2212.30px;top:1569.88px;font-size:22px;letter-spacing:0.712px;color:#bbbbbb;">UTF-8</div>
<div class="t" style="left:2302.60px;top:1569.88px;font-size:22px;letter-spacing:0.243px;color:#bbbbbb;">2 spaces</div>
<svg class="abs" style="left:2414px;top:1568.2px" width="23" height="22" viewBox="0 0 23 22"><rect x="5.6" y="10" width="16.6" height="11.8" fill="#afb1b3"/><path d="M1.7 9.2V6.2Q1.7 1.7 6.2 1.7Q10.6 1.7 10.6 6.2V10.5" fill="none" stroke="#afb1b3" stroke-width="3.4"/></svg>
<svg class="abs" style="left:2461.8px;top:1566.2px" width="28.4" height="28.4" viewBox="0 0 28.4 28.4"><circle cx="14.2" cy="14.2" r="14.1" fill="#afb1b3"/><ellipse cx="9.6" cy="10.8" rx="1.9" ry="2.7" fill="#3c3f41"/><ellipse cx="18.8" cy="10.8" rx="1.9" ry="2.7" fill="#3c3f41"/><path d="M7 17.4Q14.2 24.6 21.4 17.4" fill="none" stroke="#3c3f41" stroke-width="2.6"/></svg>
<svg class="abs" style="left:2510px;top:1566.2px" width="28.4" height="28.4" viewBox="0 0 28.4 28.4"><circle cx="14.2" cy="14.2" r="14.1" fill="#afb1b3"/><ellipse cx="9.6" cy="10.8" rx="1.9" ry="2.7" fill="#3c3f41"/><ellipse cx="18.8" cy="10.8" rx="1.9" ry="2.7" fill="#3c3f41"/><path d="M7.4 21.8Q14.2 15.4 21 21.8" fill="none" stroke="#3c3f41" stroke-width="2.6"/></svg>
</body></html>
